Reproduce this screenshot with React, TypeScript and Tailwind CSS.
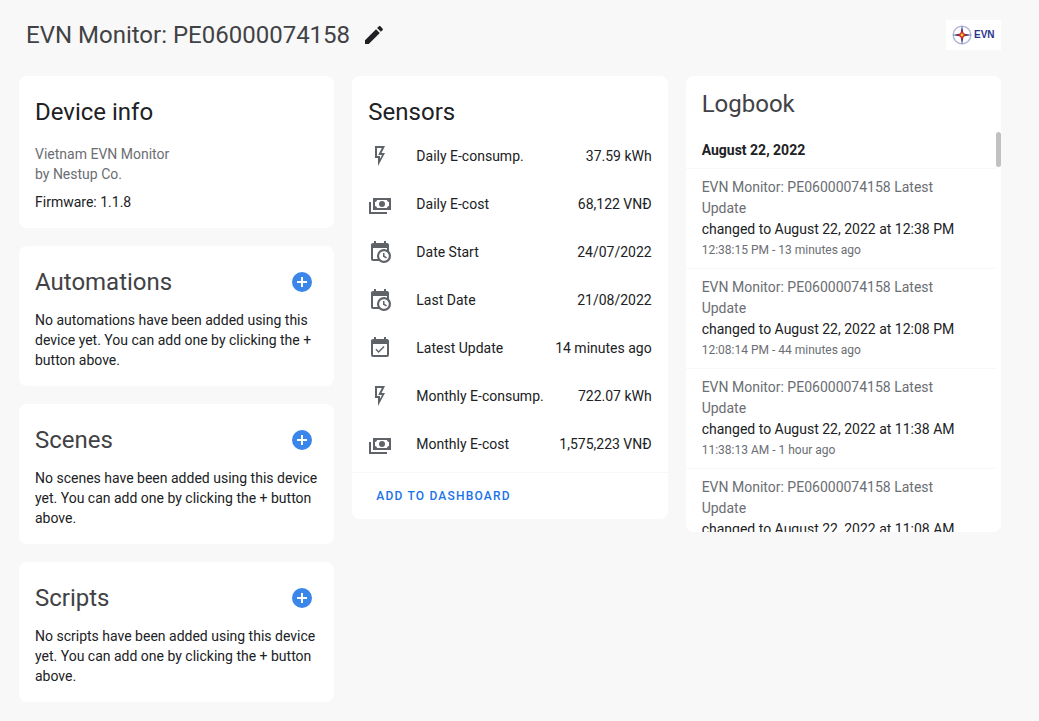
const icons = {
  flash: 'M7,2H17L13.5,9H17L10,22V14H7V2M9,4V12H12V14.66L14,11H10.24L13.76,4H9Z',
  cash: 'M5,6H23V18H5V6M14,9A3,3 0 0,1 17,12A3,3 0 0,1 14,15A3,3 0 0,1 11,12A3,3 0 0,1 14,9M9,8A2,2 0 0,1 7,10V14A2,2 0 0,1 9,16H19A2,2 0 0,1 21,14V10A2,2 0 0,1 19,8H9M1,10H3V20H19V22H1V10Z',
  calendarClock:
    'M15,13H16.5V15.82L18.94,17.23L18.19,18.53L15,16.69V13M19,8H5V19H9.67C9.24,18.09 9,17.07 9,16A7,7 0 0,1 16,9C17.07,9 18.09,9.24 19,9.67V8M5,21C3.89,21 3,20.1 3,19V5C3,3.89 3.89,3 5,3H6V1H8V3H16V1H18V3H19A2,2 0 0,1 21,5V11.1C22.24,12.36 23,14.09 23,16A7,7 0 0,1 16,23C14.09,23 12.36,22.24 11.1,21H5M16,11.15A4.85,4.85 0 0,0 11.15,16C11.15,18.68 13.32,20.85 16,20.85A4.85,4.85 0 0,0 20.85,16C20.85,13.32 18.68,11.15 16,11.15Z',
  calendarCheck:
    'M19,19H5V8H19M19,3H18V1H16V3H8V1H6V3H5C3.89,3 3,3.89 3,5V19A2,2 0 0,0 5,21H19A2,2 0 0,0 21,19V5C21,3.89 20.1,3 19,3M16.53,11.06L15.47,10L10.59,14.88L8.47,12.76L7.41,13.82L10.59,17L16.53,11.06Z',
  pencil:
    'M20.71,7.04C21.1,6.65 21.1,6 20.71,5.63L18.37,3.29C18,2.9 17.35,2.9 16.96,3.29L15.12,5.12L18.87,8.87M3,17.25V21H6.75L17.81,9.93L14.06,6.18L3,17.25Z',
  plusCircle:
    'M17,13H13V17H11V13H7V11H11V7H13V11H17M12,2A10,10 0 0,0 2,12A10,10 0 0,0 12,22A10,10 0 0,0 22,12A10,10 0 0,0 12,2Z',
};

type IconName = keyof typeof icons;

function Icon({ name }: { name: IconName }) {
  return (
    <svg viewBox="0 0 24 24" className="size-6 shrink-0" fill="currentColor" aria-hidden="true">
      <path d={icons[name]} />
    </svg>
  );
}

const sensors: { icon: IconName; label: string; value: string }[] = [
  { icon: 'flash', label: 'Daily E-consump.', value: '37.59 kWh' },
  { icon: 'cash', label: 'Daily E-cost', value: '68,122 VNĐ' },
  { icon: 'calendarClock', label: 'Date Start', value: '24/07/2022' },
  { icon: 'calendarClock', label: 'Last Date', value: '21/08/2022' },
  { icon: 'calendarCheck', label: 'Latest Update', value: '14 minutes ago' },
  { icon: 'flash', label: 'Monthly E-consump.', value: '722.07 kWh' },
  { icon: 'cash', label: 'Monthly E-cost', value: '1,575,223 VNĐ' },
];

const addable = [
  {
    title: 'Automations',
    text: 'No automations have been added using this device yet. You can add one by clicking the + button above.',
  },
  {
    title: 'Scenes',
    text: 'No scenes have been added using this device yet. You can add one by clicking the + button above.',
  },
  {
    title: 'Scripts',
    text: 'No scripts have been added using this device yet. You can add one by clicking the + button above.',
  },
];

const entries = [
  { at: '12:38 PM', when: '12:38:15 PM - 13 minutes ago' },
  { at: '12:08 PM', when: '12:08:14 PM - 44 minutes ago' },
  { at: '11:38 AM', when: '11:38:13 AM - 1 hour ago' },
  { at: '11:08 AM', when: '' },
];

function Logo() {
  return (
    <div className="flex h-[30px] w-[55px] items-center gap-[2px] bg-white pl-[6px]">
      <svg viewBox="0 0 20 20" className="size-5 shrink-0" role="img" aria-label="EVN">
        <circle cx="10" cy="10" r="8.8" fill="none" stroke="#b4b8d6" strokeWidth="1.5" />
        <path d="M10 0.6 L11.5 8.5 L19.4 10 L11.5 11.5 L10 19.4 L8.5 11.5 L0.6 10 L8.5 8.5 Z" fill="#2b3186" />
        <path d="M10 5 L11.6 8.4 L15 10 L11.6 11.6 L10 15 L8.4 11.6 L5 10 L8.4 8.4 Z" fill="#e3261c" />
        <circle cx="10" cy="10" r="1.4" fill="#fbd428" />
      </svg>
      <span className="font-['Liberation_Sans',sans-serif] text-[10px] leading-none font-bold text-[#2a3590]">EVN</span>
    </div>
  );
}

export default function App() {
  return (
    <main className="min-h-screen bg-[#f8f8f8] pt-5 pr-[38px] pb-5 pl-[19px] font-[Roboto,sans-serif] text-sm leading-5 text-[#202124]">
      <header className="mb-[26px] flex h-[30px] items-center gap-3 pl-[7px]">
        <h1 className="text-2xl text-[#414245]">EVN Monitor: PE06000074158</h1>
        <button type="button" aria-label="Edit device">
          <Icon name="pencil" />
        </button>
        <div className="ml-auto">
          <Logo />
        </div>
      </header>

      <div className="grid grid-cols-3 items-start gap-[18px]">
        <div className="flex flex-col gap-[18px]">
          <section className="rounded-lg bg-white px-4 pt-3 pb-4">
            <h2 className="mb-2 text-2xl leading-[48px]">Device info</h2>
            <p className="text-[#6b6e73]">
              Vietnam EVN Monitor
              <br />
              by Nestup Co.
            </p>
            <p className="mt-2">Firmware: 1.1.8</p>
          </section>
          {addable.map((card) => (
            <section key={card.title} className="rounded-lg bg-white px-4 pt-3 pb-4">
              <div className="mb-1 flex items-center justify-between pr-1">
                <h2 className="text-2xl leading-[48px] text-[#414245]">{card.title}</h2>
                <button type="button" aria-label={`Add to ${card.title}`} className="text-[#3a86ea]">
                  <Icon name="plusCircle" />
                </button>
              </div>
              <p>{card.text}</p>
            </section>
          ))}
        </div>

        <section className="rounded-lg bg-white">
          <h2 className="px-4 pt-3 text-2xl leading-[48px]">Sensors</h2>
          <ul className="flex flex-col gap-2 px-4 pb-2">
            {sensors.map((sensor) => (
              <li key={sensor.label} className="flex h-10 items-center">
                <span className="mr-6 text-[#5f6368]">
                  <Icon name={sensor.icon} />
                </span>
                <span>{sensor.label}</span>
                <span className="ml-auto">{sensor.value}</span>
              </li>
            ))}
          </ul>
          <div className="flex h-[47px] items-center border-t border-[#f8f8f8] px-4">
            <button type="button" className="px-2 text-xs font-medium tracking-widest text-[#1a73e8] uppercase">
              Add to dashboard
            </button>
          </div>
        </section>

        <section className="overflow-hidden rounded-lg bg-white">
          <h2 className="px-4 py-1 text-2xl leading-[48px] text-[#414245]">Logbook</h2>
          <div className="flex h-[400px]">
            <div className="min-w-0 flex-1 overflow-y-auto [scrollbar-width:none]">
              <h3 className="px-4 py-2 font-bold">August 22, 2022</h3>
              {entries.map((entry) => (
                <article key={entry.at} className="border-t border-[#f8f8f8] px-4 py-2 leading-[21px]">
                  <p className="text-[#6b6e73]">EVN Monitor: PE06000074158 Latest Update</p>
                  <p>changed to August 22, 2022 at {entry.at}</p>
                  {entry.when && <p className="text-xs leading-5 text-[#6b6e73]">{entry.when}</p>}
                </article>
              ))}
            </div>
            <div className="w-[5px] shrink-0">
              <div className="h-[35px] rounded-sm bg-[#c1c1c1]" />
            </div>
          </div>
        </section>
      </div>
    </main>
  );
}
